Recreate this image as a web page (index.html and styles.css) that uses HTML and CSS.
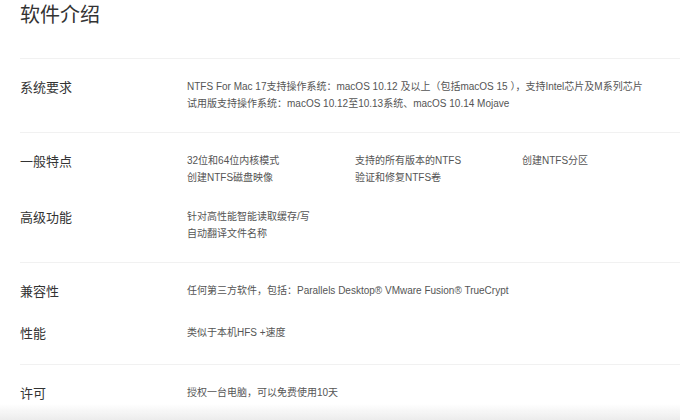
FILE: index.html
```html
<!DOCTYPE html>
<html lang="zh-CN">
<head>
<meta charset="utf-8">
<link rel="stylesheet" href="styles.css">
</head>
<body>
<div class="page">
  <h2 class="title">软件介绍</h2>

  <section class="group">
    <div class="row">
      <div class="label">系统要求</div>
      <div class="content">
        <p>NTFS For Mac 17支持操作系统：macOS 10.12 及以上（包括macOS 15 ），支持Intel芯片及M系列芯片</p>
        <p>试用版支持操作系统：macOS 10.12至10.13系统、macOS 10.14 Mojave</p>
      </div>
    </div>
  </section>

  <section class="group">
    <div class="row">
      <div class="label">一般特点</div>
      <div class="content grid3">
        <span>32位和64位内核模式</span>
        <span>支持的所有版本的NTFS</span>
        <span>创建NTFS分区</span>
        <span>创建NTFS磁盘映像</span>
        <span>验证和修复NTFS卷</span>
      </div>
    </div>
    <div class="row">
      <div class="label">高级功能</div>
      <div class="content">
        <p>针对高性能智能读取缓存/写</p>
        <p>自动翻译文件名称</p>
      </div>
    </div>
  </section>

  <section class="group">
    <div class="row">
      <div class="label">兼容性</div>
      <div class="content">
        <p>任何第三方软件，包括：Parallels Desktop® VMware Fusion® TrueCrypt</p>
      </div>
    </div>
    <div class="row">
      <div class="label">性能</div>
      <div class="content">
        <p>类似于本机HFS +速度</p>
      </div>
    </div>
  </section>

  <section class="group">
    <div class="row">
      <div class="label">许可</div>
      <div class="content">
        <p>授权一台电脑，可以免费使用10天</p>
      </div>
    </div>
  </section>
</div>
<div class="shade"></div>
</body>
</html>
```

FILE: styles.css
```css
html, body {
  margin: 0;
  padding: 0;
  background: #ffffff;
  overflow: hidden;
}

body {
  font-family: "Liberation Sans", "Noto Sans CJK SC", sans-serif;
  color: #333333;
}

.page {
  margin-left: 20px;
}

.title {
  margin: 0;
  font-size: 20px;
  font-weight: 400;
  line-height: 30px;
  color: #333333;
  padding-bottom: 28px;
  border-bottom: 1px solid #f1f1f1;
}

.group {
  display: flex;
  flex-direction: column;
  gap: 22px;
  padding: 19px 0 20px;
  border-bottom: 1px solid #f1f1f1;
}

.group:last-child {
  border-bottom: none;
}

.row {
  display: grid;
  grid-template-columns: 167px 1fr;
  align-items: start;
}

.label {
  font-size: 13px;
  line-height: 20px;
  color: #333333;
}

.content {
  font-size: 10px;
  line-height: 17px;
  color: #555555;
}

.content p {
  margin: 0;
}

.grid3 {
  display: grid;
  grid-template-columns: 168px 167px 168px;
}

.shade {
  position: fixed;
  left: 0;
  right: 0;
  bottom: 0;
  height: 16px;
  background: linear-gradient(to bottom, rgba(238, 238, 238, 0), #ececec);
}
```
